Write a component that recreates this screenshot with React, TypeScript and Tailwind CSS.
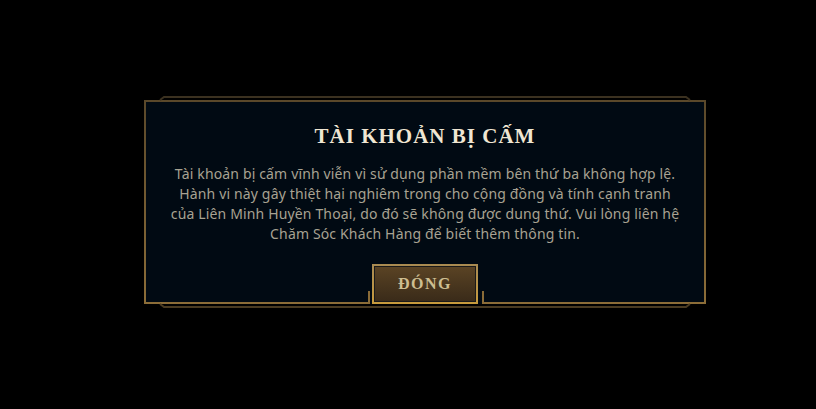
import React from "react";

export default function App() {
  return (
    <div className="w-[816px] h-[409px] bg-black overflow-hidden pl-[144px] pt-[100px]">
      <div className="relative w-[562px] h-[204px] bg-[#010a13] flex flex-col items-center">
        <svg
          className="absolute left-0 top-0 overflow-visible pointer-events-none"
          width="562"
          height="204"
          viewBox="0 0 562 204"
          fill="none"
        >
          <defs>
            <linearGradient id="bord" x1="0" y1="0" x2="0" y2="204" gradientUnits="userSpaceOnUse">
              <stop offset="0" stopColor="#5a482a" />
              <stop offset="1" stopColor="#8c6d38" />
            </linearGradient>
          </defs>
          <path d="M 225 191 V 203 H 1 V 1 H 561 V 203 H 339 V 191" stroke="url(#bord)" strokeWidth="2" />
          <path d="M 16 0 L 20 -3 H 542 L 546 0" stroke="#3b3120" strokeWidth="2" />
          <path d="M 16 204 L 20 207 H 542 L 546 204" stroke="#4a3b22" strokeWidth="2" />
        </svg>
        <h1 className="mt-[22px] text-[21px] leading-[28px] font-bold tracking-[1px] text-[#f0e6d2] font-['Liberation_Serif',serif]">
          TÀI KHOẢN BỊ CẤM
        </h1>
        <p className="mt-[14px] text-center text-[14px] leading-[20px] tracking-[0.15px] text-[#a8a292] font-['Noto_Sans',sans-serif]">
          Tài khoản bị cấm vĩnh viễn vì sử dụng phần mềm bên thứ ba không hợp lệ.
          <br />
          Hành vi này gây thiệt hại nghiêm trong cho cộng đồng và tính cạnh tranh
          <br />
          của Liên Minh Huyền Thoại, do đó sẽ không được dung thứ. Vui lòng liên hệ
          <br />
          Chăm Sóc Khách Hàng để biết thêm thông tin.
        </p>
        <div className="mt-auto w-[106px] h-[40px] p-[2px] bg-gradient-to-b from-[#a88a52] to-[#c89b3c]">
          <div className="w-full h-full border border-[#1a1a1a] bg-gradient-to-b from-[#5a4324] to-[#3a2b19] flex items-center justify-center">
            <span className="text-[16px] font-bold tracking-[1.5px] text-[#cdbe91] font-['Liberation_Serif',serif]">
              ĐÓNG
            </span>
          </div>
        </div>
      </div>
    </div>
  );
}
